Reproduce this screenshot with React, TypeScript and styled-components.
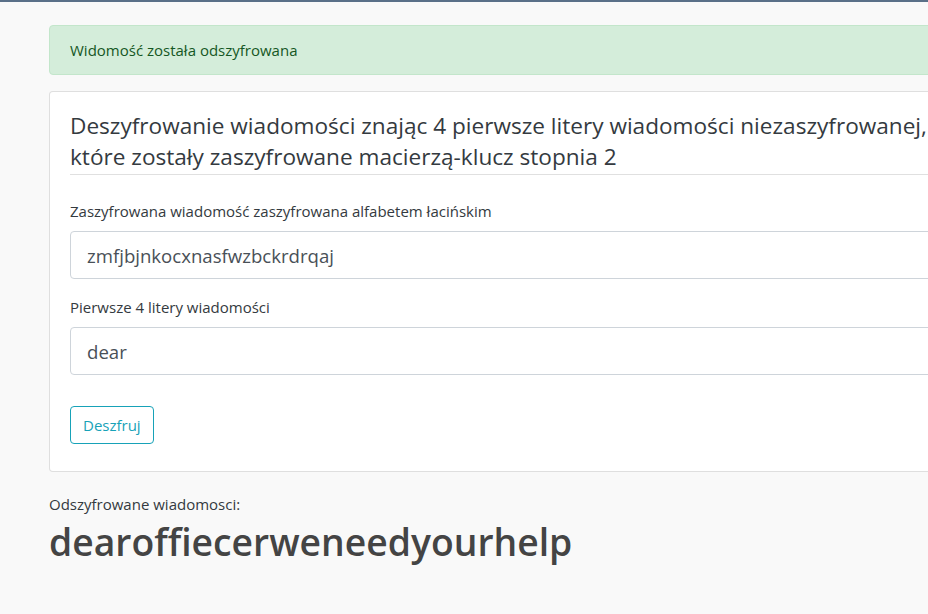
import React from "react";
import styled, { createGlobalStyle } from "styled-components";

const Global = createGlobalStyle`
  html, body { margin: 0; padding: 0; }
  body {
    background: #f9f9f9;
    font-family: "Open Sans", "Noto Sans", "Liberation Sans", sans-serif;
    color: #212529;
    overflow: hidden;
    width: 928px;
    height: 614px;
  }
  * { box-sizing: border-box; }
`;

const TopBar = styled.div`
  height: 2px;
  background: #5a7088;
`;

const Page = styled.main`
  width: 1120px;
  padding: 23px 0 0 49px;
`;

const Alert = styled.div`
  background: #d4edda;
  border: 1px solid #c3e6cb;
  border-radius: 4px;
  color: #155724;
  font-size: 15px;
  line-height: 24px;
  padding: 12px 20px;
  margin-bottom: 16px;
`;

const Card = styled.section`
  background: #fff;
  border: 1px solid rgba(0, 0, 0, 0.125);
  border-radius: 4px;
  padding: 18px 20px 27px;
`;

const Title = styled.h2`
  margin: 0;
  max-width: 880px;
  font-size: 22.6px;
  font-weight: 400;
  line-height: 31px;
  color: #343a40;
`;

const Rule = styled.hr`
  border: 0;
  border-top: 1px solid rgba(0, 0, 0, 0.12);
  margin: 2px 0 25px;
`;

const Group = styled.div`
  margin-bottom: 17px;
`;

const Label = styled.label`
  display: block;
  font-size: 15px;
  line-height: 22px;
  margin-bottom: 9px;
  color: #343a40;
`;

const Input = styled.input`
  display: block;
  width: 100%;
  height: 48px;
  padding: 8px 16px;
  font-family: inherit;
  font-size: 18.6px;
  color: #495057;
  background: #fff;
  border: 1px solid #ced4da;
  border-radius: 4px;
  outline: none;
`;

const Button = styled.button`
  margin-top: 14px;
  font-family: inherit;
  font-size: 15px;
  line-height: 24px;
  padding: 6px 12px;
  color: #17a2b8;
  background: transparent;
  border: 1px solid #17a2b8;
  border-radius: 4px;
`;

const Result = styled.div`
  margin-top: 22px;
`;

const ResultLabel = styled.div`
  font-size: 15px;
  line-height: 21px;
  color: #343a40;
`;

const ResultText = styled.div`
  font-size: 37.3px;
  font-weight: 600;
  line-height: 54px;
  color: #444;
`;

export default function App() {
  return (
    <>
      <Global />
      <TopBar />
      <Page>
        <Alert>Widomość została odszyfrowana</Alert>
        <Card>
          <Title>
            Deszyfrowanie wiadomości znając 4 pierwsze litery wiadomości niezaszyfrowanej, które zostały
            zaszyfrowane macierzą-klucz stopnia 2
          </Title>
          <Rule />
          <Group>
            <Label>Zaszyfrowana wiadomość zaszyfrowana alfabetem łacińskim</Label>
            <Input defaultValue="zmfjbjnkocxnasfwzbckrdrqaj" />
          </Group>
          <Group>
            <Label>Pierwsze 4 litery wiadomości</Label>
            <Input defaultValue="dear" />
          </Group>
          <Button>Deszfruj</Button>
        </Card>
        <Result>
          <ResultLabel>Odszyfrowane wiadomosci:</ResultLabel>
          <ResultText>dearoffiecerweneedyourhelp</ResultText>
        </Result>
      </Page>
    </>
  );
}
